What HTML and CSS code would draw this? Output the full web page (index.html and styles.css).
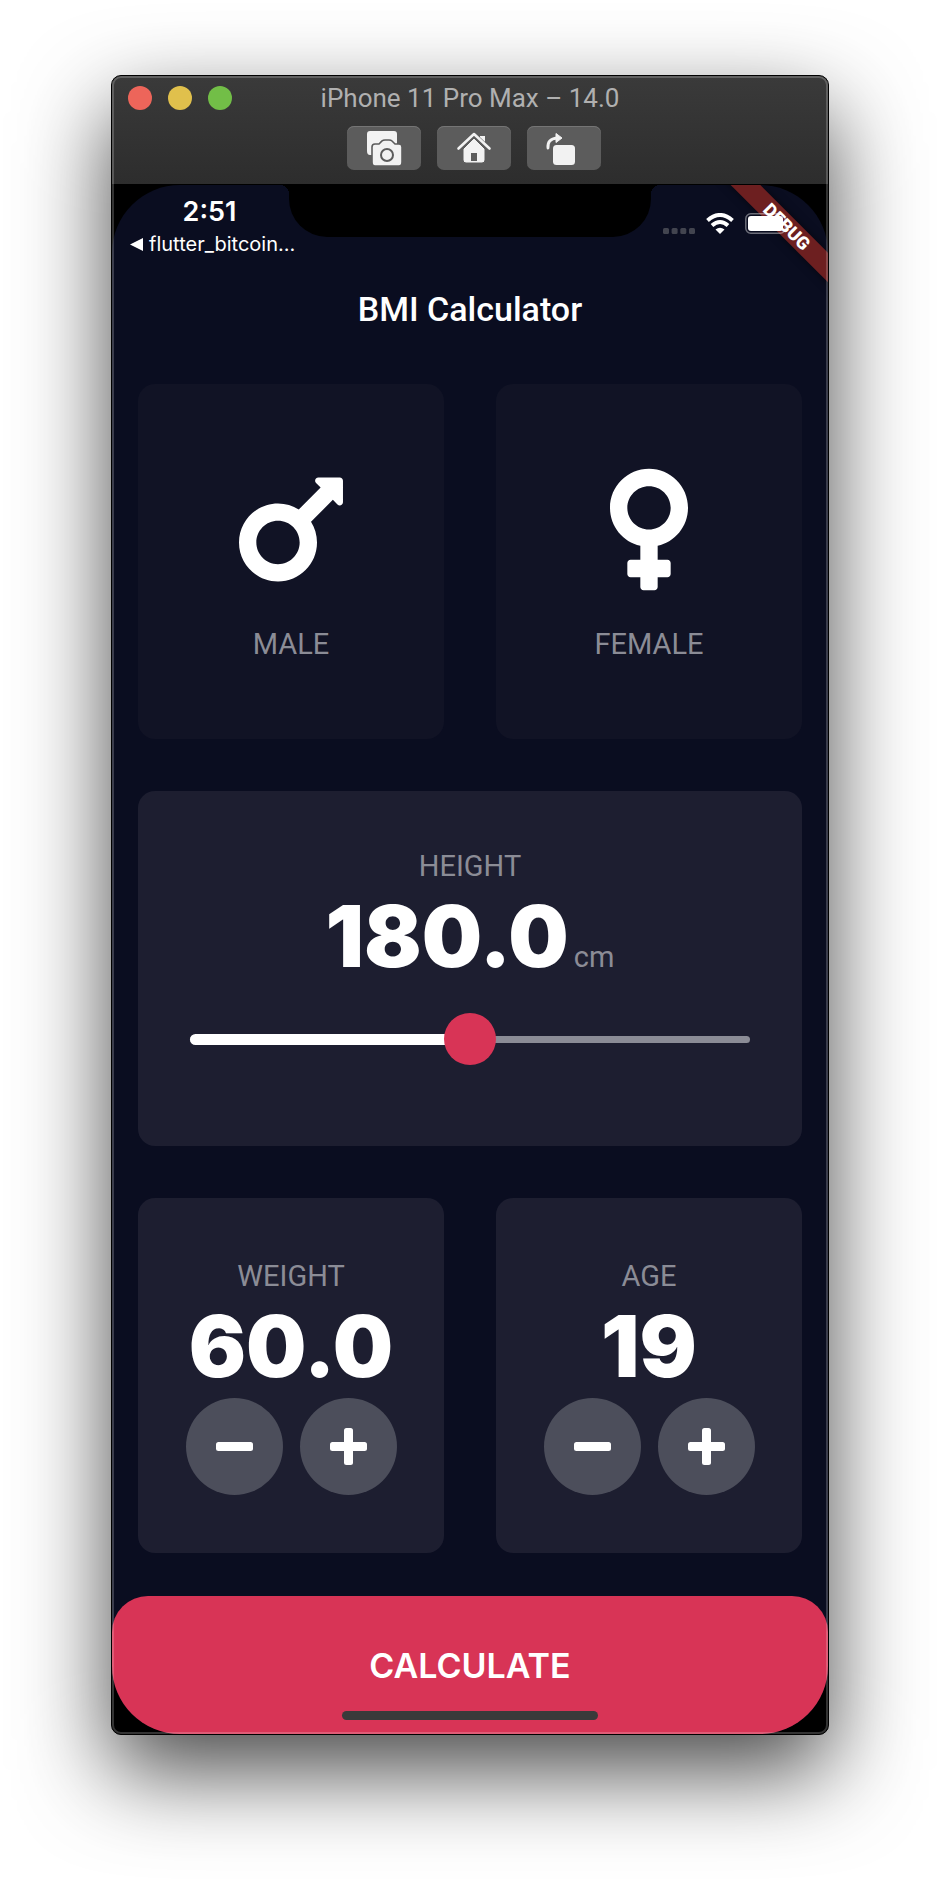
FILE: index.html
```html
<!DOCTYPE html>
<html lang="en">
<head>
<meta charset="utf-8">
<meta name="viewport" content="width=device-width, initial-scale=1">
<title>BMI Calculator</title>
<link rel="stylesheet" href="styles.css">
</head>
<body>
<div class="window">
  <header class="titlebar">
    <div class="titlebar-row">
      <div class="lights">
        <button class="light light-close" aria-label="Close"></button>
        <button class="light light-min" aria-label="Minimize"></button>
        <button class="light light-zoom" aria-label="Zoom"></button>
      </div>
      <div class="window-title">iPhone 11 Pro Max – 14.0</div>
    </div>
    <div class="tools">
      <button class="tool" aria-label="Screenshot">
        <svg width="36" height="36" viewBox="0 0 36 36">
          <path fill="#f2f2f2" d="M4 1h24a3 3 0 0 1 3 3v10h-4l-2-3q-1-1-3-1h-4q-2 0-3 1l-2 3h-2q-4 0-4 4v7H4q-3 0-3-4V4a3 3 0 0 1 3-3z"/>
          <path fill="#f2f2f2" stroke="#5c5c5c" stroke-width="1.6" d="M9 14h4l3-3q1-1 3-1h4q2 0 3 1l3 3h4q3 0 3 3v15q0 4-3 4H9q-3 0-3-4V17q0-3 3-3z"/>
          <circle cx="21" cy="25" r="6" fill="none" stroke="#5c5c5c" stroke-width="2"/>
        </svg>
      </button>
      <button class="tool" aria-label="Home">
        <svg width="36" height="36" viewBox="0 0 36 36">
          <path fill="#f2f2f2" d="M24 6h5v9l-5-5z"/>
          <path fill="#f2f2f2" stroke="#5c5c5c" stroke-width="1" d="M18 8 29 19v11q0 3-3 3H10q-3 0-3-3V19z"/>
          <path fill="none" stroke="#5c5c5c" stroke-width="5" d="M2 20 18 5 34 20"/>
          <path fill="none" stroke="#f2f2f2" stroke-width="2.6" stroke-linecap="round" stroke-linejoin="round" d="M2.500 18.500 18 4 33.500 18.500"/>
          <path fill="#5c5c5c" d="M15 23h6v8h-6z"/>
        </svg>
      </button>
      <button class="tool" aria-label="Rotate">
        <svg width="36" height="36" viewBox="0 0 36 36">
          <path fill="none" stroke="#f2f2f2" stroke-width="2.800" stroke-linecap="round" d="M2 18Q1 9 11 8"/>
          <path fill="#f2f2f2" stroke="#f2f2f2" stroke-linejoin="round" d="M10 3.500 16 8l-6 4.500z"/>
          <rect x="7" y="15" width="22" height="20" rx="3.500" fill="#f2f2f2"/>
        </svg>
      </button>
    </div>
  </header>

  <div class="device">
    <div class="screen">
      <div class="ribbon-corner"><span class="ribbon">DEBUG</span></div>
      <div class="status">
        <div class="status-left">
          <time class="clock">2:51</time>
          <a class="back" href="#">
            <svg width="13" height="13" viewBox="0 0 13 13"><path fill="#fff" d="M0 6.500 13 0v13z"/></svg>
            flutter_bitcoin...
          </a>
        </div>
        <div class="notch"></div>
        <div class="status-right">
          <svg width="32" height="12" viewBox="0 0 32 12" fill="#42444f"><rect y="6" width="6" height="6" rx="1.500"/><rect x="8.600" y="6" width="6" height="6" rx="1.500"/><rect x="17.300" y="6" width="6" height="6" rx="1.500"/><rect x="26" y="6" width="6" height="6" rx="1.500"/></svg>
          <svg width="28" height="21" viewBox="0 0 28 21">
            <g fill="none" stroke="#fff" stroke-width="4"><path d="M1.500 7.500Q14-3.500 26.500 7.500"/><path d="M6 12.500q8-7 16 0"/></g>
            <path fill="#fff" d="M14 21l-4.500-4.500q4.500-3.500 9 0z"/>
          </svg>
          <svg width="41" height="21" viewBox="0 0 41 21">
            <rect x="0.800" y="0.800" width="39.400" height="19.400" rx="5" fill="none" stroke="#fff" stroke-opacity=".4" stroke-width="1.500"/>
            <rect x="3" y="3" width="35" height="15" rx="3" fill="#fff"/>
          </svg>
        </div>
      </div>

      <h1 class="app-title">BMI Calculator</h1>

      <main class="cards">
        <div class="row">
          <button class="card card-dim">
            <svg class="gender" width="104" height="139" viewBox="0 0 384 512"><path fill="#fff" d="M372 64h-79c-10.700 0-16 12.900-8.500 20.400l16.900 16.900-80.700 80.700c-22.200-14-48.500-22.100-76.700-22.100C64.500 160 0 224.500 0 304s64.500 144 144 144 144-64.500 144-144c0-28.200-8.100-54.500-22.100-76.700l80.700-80.700 16.900 16.900c7.600 7.600 20.400 2.200 20.400-8.500V76c0-6.600-5.400-12-12-12zM144 384c-44.100 0-80-35.900-80-80s35.900-80 80-80 80 35.900 80 80-35.900 80-80 80z"/></svg>
            <span class="label">MALE</span>
          </button>
          <button class="card card-dim">
            <svg class="gender" width="78" height="139" viewBox="0 0 288 512"><path fill="#fff" d="M288 176c0-79.500-64.500-144-144-144S0 96.500 0 176c0 68.500 47.900 125.900 112 140.400V368H76c-6.600 0-12 5.400-12 12v40c0 6.600 5.400 12 12 12h36v36c0 6.600 5.400 12 12 12h40c6.600 0 12-5.400 12-12v-36h36c6.600 0 12-5.400 12-12v-40c0-6.600-5.400-12-12-12h-36v-51.600c64.100-14.600 112-71.900 112-140.400zm-224 0c0-44.100 35.900-80 80-80s80 35.900 80 80-35.900 80-80 80-80-35.900-80-80z"/></svg>
            <span class="label">FEMALE</span>
          </button>
        </div>

        <div class="row">
          <section class="card">
            <label class="label" for="height">HEIGHT</label>
            <div class="figure"><output class="number" for="height">180.0</output><span class="label">cm</span></div>
            <div class="slider">
              <input id="height" type="range" min="120" max="240" value="180">
            </div>
          </section>
        </div>

        <div class="row">
          <section class="card">
            <h2 class="label">WEIGHT</h2>
            <output class="number">60.0</output>
            <div class="steppers">
              <button class="step" aria-label="Decrease weight"><svg width="37" height="37" viewBox="0 0 37 37" fill="#fff"><rect y="14" width="37" height="9" rx="2.500"/></svg></button>
              <button class="step" aria-label="Increase weight"><svg width="37" height="37" viewBox="0 0 37 37" fill="#fff"><rect y="14" width="37" height="9" rx="2.500"/><rect x="14" width="9" height="37" rx="2.500"/></svg></button>
            </div>
          </section>
          <section class="card">
            <h2 class="label">AGE</h2>
            <output class="number">19</output>
            <div class="steppers">
              <button class="step" aria-label="Decrease age"><svg width="37" height="37" viewBox="0 0 37 37" fill="#fff"><rect y="14" width="37" height="9" rx="2.500"/></svg></button>
              <button class="step" aria-label="Increase age"><svg width="37" height="37" viewBox="0 0 37 37" fill="#fff"><rect y="14" width="37" height="9" rx="2.500"/><rect x="14" width="9" height="37" rx="2.500"/></svg></button>
            </div>
          </section>
        </div>
      </main>

      <button class="calculate">CALCULATE<span class="home-bar"></span></button>
    </div>
  </div>
</div>
</body>
</html>
```

FILE: styles.css
```css
* {
  box-sizing: border-box;
}

body {
  margin: 0;
  min-height: 100vh;
  padding: 75px 111px 147px;
  display: flex;
  flex-direction: column;
  background: #fff;
  color: #fff;
  font-family: Roboto, "Liberation Sans", sans-serif;
  overflow-x: hidden;
}

button {
  border: 0;
  padding: 0;
  margin: 0;
  font: inherit;
  color: inherit;
}

svg {
  display: block;
  flex: none;
}

/* Simulator window */
.window {
  position: relative;
  flex: 1;
  display: flex;
  flex-direction: column;
  border: 1px solid #000;
  border-radius: 10px;
  background: #000;
  box-shadow: 0 36px 90px rgba(0, 0, 0, 0.72);
}

.window::after {
  content: "";
  position: absolute;
  inset: 0;
  border: 2px solid rgba(255, 255, 255, 0.2);
  border-radius: 9px;
  pointer-events: none;
}

.titlebar {
  height: 108px;
  padding-top: 4px;
  border-radius: 9px 9px 0 0;
  background: linear-gradient(#3a3a3a, #2d2d2d);
}

.titlebar-row {
  display: grid;
  grid-template-columns: 1fr auto 1fr;
  align-items: center;
  height: 36px;
  padding: 0 16px;
}

.lights {
  display: flex;
  gap: 16px;
}

.light {
  width: 24px;
  height: 24px;
  border-radius: 50%;
}

.light-close {
  background: #ed655a;
}

.light-min {
  background: #e0c04c;
}

.light-zoom {
  background: #72be47;
}

.window-title {
  color: #b0b0b0;
  font-size: 26px;
  line-height: 36px;
}

.tools {
  display: flex;
  justify-content: center;
  gap: 16px;
  padding: 10px 0 0 8px;
}

.tool {
  display: grid;
  place-items: center;
  width: 74px;
  height: 44px;
  border-radius: 7px;
  background: #5c5c5c;
  box-shadow: inset 0 1px #757575;
}

/* Phone screen */
.device {
  flex: 1;
  display: flex;
  flex-direction: column;
  padding-top: 1px;
  border-radius: 0 0 9px 9px;
  overflow: hidden;
}

.screen {
  position: relative;
  flex: 1;
  display: flex;
  flex-direction: column;
  border-radius: 68px;
  background: #0a0d20;
  overflow: hidden;
}

.ribbon-corner {
  position: absolute;
  top: 0;
  right: 0;
  width: 120px;
  height: 120px;
  overflow: hidden;
}

.ribbon {
  position: absolute;
  top: 31px;
  right: -49px;
  width: 180px;
  background: #6d1f20;
  box-shadow: 0 0 8px rgba(0, 0, 0, 0.5);
  font-size: 18px;
  font-weight: 900;
  line-height: 21px;
  text-align: center;
  transform: rotate(45deg);
}

.status {
  position: relative;
  display: grid;
  grid-template-columns: 1fr 362px 1fr;
  height: 75px;
}

.status-left {
  display: flex;
  flex-direction: column;
  min-width: 0;
  padding: 9px 0 0 18px;
}

.clock {
  font-family: Inter, sans-serif;
  font-size: 27px;
  font-weight: 600;
  line-height: 36px;
  text-align: center;
}

.back {
  display: flex;
  align-items: center;
  gap: 6px;
  color: #fff;
  font-family: Inter, sans-serif;
  font-size: 20px;
  line-height: 28px;
  text-decoration: none;
  white-space: nowrap;
}

.notch {
  position: relative;
  height: 52px;
  border-radius: 0 0 38px 38px;
  background: #000;
}

.notch::before,
.notch::after {
  content: "";
  position: absolute;
  top: 0;
  width: 9px;
  height: 9px;
}

.notch::before {
  right: 100%;
  background: radial-gradient(circle at 0 100%, transparent 9px, #000 9px);
}

.notch::after {
  left: 100%;
  background: radial-gradient(circle at 100% 100%, transparent 9px, #000 9px);
}

.status-right {
  display: flex;
  align-items: flex-end;
  gap: 11px;
  height: 49px;
  padding-left: 12px;
}

.app-title {
  margin: 0;
  font-size: 34px;
  font-weight: 500;
  line-height: 98px;
  text-align: center;
}

/* Cards */
.cards {
  flex: 1;
  display: grid;
  grid-auto-rows: 1fr;
  gap: 52px;
  padding: 26px 26px 43px;
}

.row {
  display: flex;
  gap: 52px;
}

.card {
  flex: 1;
  display: flex;
  flex-direction: column;
  align-items: center;
  justify-content: center;
  border-radius: 17px;
  background: #1d1e30;
}

.card-dim {
  background: #111325;
}

.gender {
  margin-bottom: 26px;
}

.label {
  margin: 0;
  color: #8b8c96;
  font-size: 29px;
  font-weight: 400;
  line-height: 38px;
}

.figure {
  display: flex;
  align-items: baseline;
  gap: 5px;
}

.number {
  font-family: Inter, sans-serif;
  font-size: 85px;
  font-weight: 900;
  line-height: 103px;
}

.slider {
  display: grid;
  align-items: center;
  align-self: stretch;
  height: 103px;
  margin: 0 52px;
}

.slider::before,
.slider::after,
.slider input {
  content: "";
  grid-area: 1 / 1;
}

.slider::before {
  height: 7px;
  border-radius: 4px;
  background: #8b8c96;
}

.slider::after {
  width: 50%;
  height: 11px;
  border-radius: 6px;
  background: #fff;
}

.slider input {
  z-index: 1;
  width: 100%;
  height: 52px;
  margin: 0;
  background: none;
  appearance: none;
}

.slider input::-webkit-slider-thumb {
  appearance: none;
  width: 52px;
  height: 52px;
  border-radius: 50%;
  background: #d83456;
}

.steppers {
  display: flex;
  gap: 17px;
}

.step {
  display: grid;
  place-items: center;
  width: 97px;
  height: 97px;
  border-radius: 50%;
  background: #4c4e5b;
}

.calculate {
  position: relative;
  height: 138px;
  border-radius: 36px 36px 0 0;
  background: #d83456;
  font-family: Inter, sans-serif;
  font-size: 34px;
  font-weight: 600;
}

.home-bar {
  position: absolute;
  left: 50%;
  bottom: 14px;
  width: 256px;
  height: 9px;
  margin-left: -128px;
  border-radius: 5px;
  background: #3a3a3a;
}
```
